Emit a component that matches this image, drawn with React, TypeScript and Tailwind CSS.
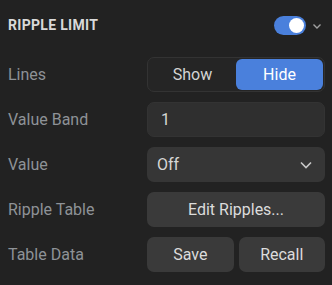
import React from 'react';

const Label: React.FC<{ children: React.ReactNode }> = ({ children }) => (
  <span className="text-[16px] text-[#8e9297]">{children}</span>
);

export default function App() {
  return (
    <div className="w-[332px] h-[285px] bg-[#222222] font-['Roboto',sans-serif] px-2 pt-[16px]">
      <div className="flex items-center justify-between h-[19px]">
        <h2 className="text-[14px] font-bold tracking-[0.3px] text-[#d9d9d9]">RIPPLE LIMIT</h2>
        <div className="flex items-center gap-[6px] pr-[2px]">
          <div className="w-[32px] h-[19px] rounded-full bg-[#4a80dc] flex items-center justify-end px-[2px]">
            <div className="w-[15px] h-[15px] rounded-full bg-white" />
          </div>
          <svg width="10" height="10" viewBox="0 0 10 10" fill="none" stroke="#a0a0a0" strokeWidth="1.4">
            <path d="M1.5 3.5 L5 7 L8.5 3.5" />
          </svg>
        </div>
      </div>

      <div className="grid grid-cols-[139px_178px] gap-y-[10px] mt-[22px] items-center">
        <Label>Lines</Label>
        <div className="h-[35px] rounded-[7px] border border-[#333333] bg-[#252525] flex p-[1px]">
          <button className="flex-1 text-[16px] text-[#d4d4d4]">Show</button>
          <button className="flex-1 rounded-[6px] bg-[#4a80dc] text-[16px] text-white">Hide</button>
        </div>

        <Label>Value Band</Label>
        <div className="h-[35px] rounded-[7px] bg-[#2f2f2f] border border-[#333333] flex items-center px-[13px] text-[16px] text-[#d6d6d6]">
          1
        </div>

        <Label>Value</Label>
        <div className="h-[35px] rounded-[7px] bg-[#363636] flex items-center justify-between pl-[10px] pr-[12px] text-[16px] text-[#d6d6d6]">
          <span>Off</span>
          <svg width="14" height="14" viewBox="0 0 14 14" fill="none" stroke="#c8c8c8" strokeWidth="1.6">
            <path d="M2 4.5 L7 9.5 L12 4.5" />
          </svg>
        </div>

        <Label>Ripple Table</Label>
        <button className="h-[35px] rounded-[7px] bg-[#3a3a3a] text-[16px] text-[#dcdcdc]">Edit Ripples...</button>

        <Label>Table Data</Label>
        <div className="flex gap-[5px]">
          <button className="flex-1 h-[35px] rounded-[7px] bg-[#3a3a3a] text-[16px] text-[#dcdcdc]">Save</button>
          <button className="flex-1 h-[35px] rounded-[7px] bg-[#3a3a3a] text-[16px] text-[#dcdcdc]">Recall</button>
        </div>
      </div>
    </div>
  );
}
